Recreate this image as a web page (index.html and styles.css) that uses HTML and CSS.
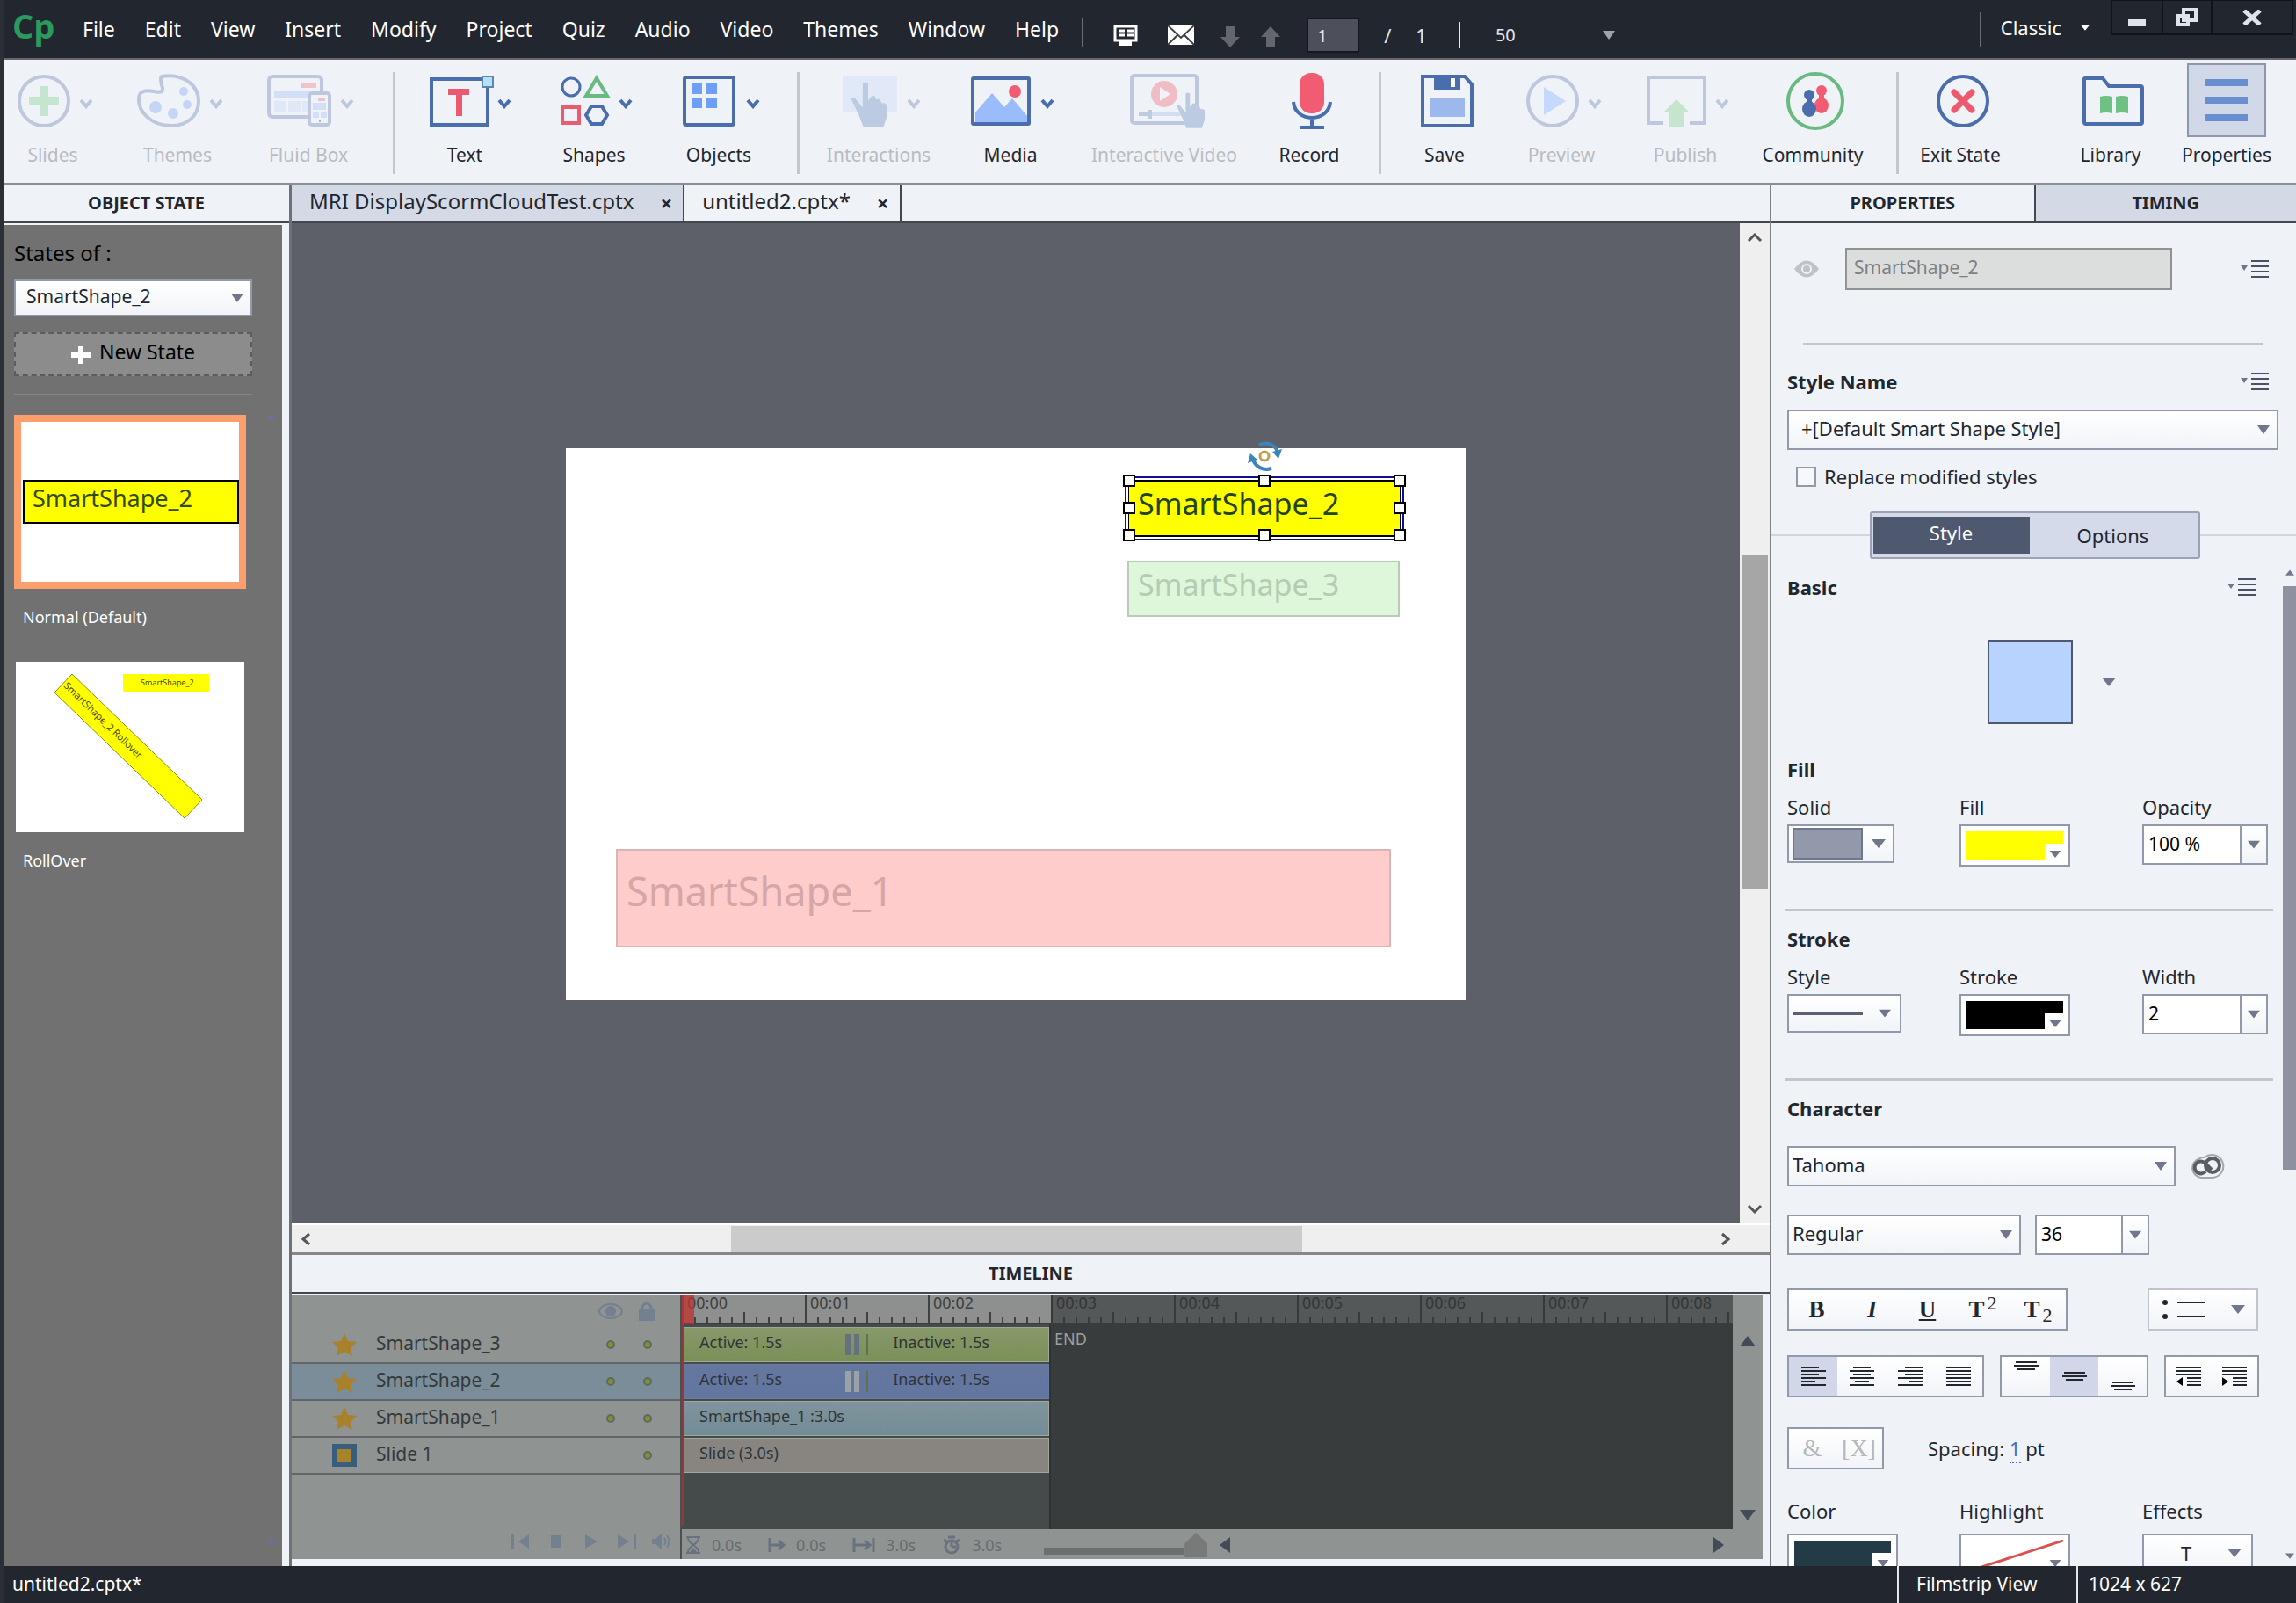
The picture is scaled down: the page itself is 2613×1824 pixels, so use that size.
FILE: index.html
```
<!DOCTYPE html>
<html lang="en">
<head>
  <meta charset="UTF-8">
  <meta name="viewport" content="width=device-width, initial-scale=1.0">
  <title>untitled2.cptx*</title>
  <link rel="stylesheet" href="styles.css">
</head>
<body>
  <!-- Shared symbols -->
  <svg class="symbols" aria-hidden="true">
    <symbol id="caret" viewBox="0 0 18 12"><path d="M3 2l6 7 6-7" fill="none" stroke="currentColor" stroke-width="4"/></symbol>
    <symbol id="down" viewBox="0 0 16 10"><path d="M0 0h16l-8 10z" fill="currentColor"/></symbol>
    <symbol id="up" viewBox="0 0 16 10"><path d="M0 10h16l-8-10z" fill="currentColor"/></symbol>
    <symbol id="hand" viewBox="0 0 40 52"><path d="M13 3q3-3 6 0v19l4-5q3-1 4 1l1 3q3-2 5 1l1 3q4-1 6 2v13l-4 12H14L9 39 0 20q2-3 5 0l8 10z" fill="currentColor"/></symbol>
    <symbol id="star" viewBox="0 0 28 26"><path d="M14 0l4 9 10 1-7 7 2 9-9-5-9 5 2-9-7-7 10-1z" fill="#a8812b"/></symbol>
    <symbol id="menu" viewBox="0 0 32 22"><path d="M0 7h8l-4 6z" fill="#70768c"/><path d="M12 2h20M12 8h20M12 14h20M12 20h20" stroke="#4a5068" stroke-width="2"/></symbol>
  </svg>

  <!-- Title bar -->
  <header class="titlebar">
    <span class="logo">Cp</span>
    <nav class="menu">
      <a href="#">File</a><a href="#">Edit</a><a href="#">View</a><a href="#">Insert</a><a href="#">Modify</a><a href="#">Project</a><a href="#">Quiz</a><a href="#">Audio</a><a href="#">Video</a><a href="#">Themes</a><a href="#">Window</a><a href="#">Help</a>
    </nav>
    <div class="title-tools">
      <button aria-label="Live preview"><svg width="28" height="24"><path d="M2 2h24v16H2z" fill="none" stroke="#fff" stroke-width="3"/><path d="M6 7h7M6 12h7M16 7h7M16 12h7" stroke="#fff" stroke-width="3"/><path d="M7 19h14v5H7z" fill="#fff"/></svg></button>
      <button aria-label="Mail"><svg width="30" height="22"><path d="M0 0h30v22H0z" fill="#fff"/><path d="M0 0l15 14L30 0M0 22l11-11M30 22L19 11" fill="none" stroke="#3a3f48" stroke-width="2"/></svg></button>
      <button aria-label="Next slide"><svg width="22" height="24"><path d="M6 0h10v12h6L11 24 0 12h6z" fill="#63666c"/></svg></button>
      <button aria-label="Previous slide"><svg width="22" height="24"><path d="M6 24h10V12h6L11 0 0 12h6z" fill="#63666c"/></svg></button>
      <input class="page" type="text" value="1" aria-label="Slide number">
      <span>/</span><span>1</span><span class="bar"></span>
      <select class="zoom" aria-label="Zoom"><option>50</option></select>
    </div>
    <button class="workspace">Classic <svg width="10" height="7"><use href="#down"/></svg></button>
    <div class="window-buttons">
      <button aria-label="Minimize"><svg width="20" height="8"><path d="M0 0h20v8H0z" fill="#dfe3ea"/></svg></button>
      <button aria-label="Restore"><svg width="26" height="22"><path d="M9 2h14v12H9zM3 9h11v10H3z" fill="#22262e" stroke="#dfe3ea" stroke-width="4"/></svg></button>
      <button aria-label="Close"><svg width="22" height="18"><path d="M2 1l18 16M20 1L2 17" stroke="#dfe3ea" stroke-width="5"/></svg></button>
    </div>
  </header>

  <!-- Toolbar -->
  <div class="toolbar">
    <div class="group g1">
      <button class="tool" disabled><span class="icon"><svg width="62" height="62"><circle cx="31" cy="31" r="28" fill="none" stroke="#bdc8df" stroke-width="4"/><path d="M26 14h10v12h12v10H36v12H26V36H14V26h12z" fill="#c5e5cf"/></svg><svg class="caret"><use href="#caret"/></svg></span>Slides</button>
      <button class="tool" disabled><span class="icon"><svg width="74" height="62"><path d="M29 3c23-4 42 9 42 28 0 17-13 28-31 28C17 59 2 43 3 28c0-8 7-10 17-8 9 2 12 0 9-7-1-4-2-8 0-10z" fill="none" stroke="#bdc8df" stroke-width="4"/><g fill="#c4d6f6"><circle cx="54" cy="20" r="5"/><circle cx="58" cy="35" r="5"/><circle cx="42" cy="45" r="6"/><circle cx="22" cy="38" r="7"/></g></svg><svg class="caret"><use href="#caret"/></svg></span>Themes</button>
      <button class="tool" disabled><span class="icon"><svg width="74" height="60"><rect x="2" y="2" width="60" height="46" rx="4" fill="none" stroke="#bdc8df" stroke-width="4"/><path d="M38 9h18v6H38z" fill="#efc3ca"/><path d="M8 18h48v9H8z" fill="#d3dff6"/><path d="M8 30h14v12H8zM24 30h14v12H24zM40 30h14v12H40z" fill="#e0e7f6"/><rect x="48" y="21" width="23" height="36" rx="3" fill="#eff2f7" stroke="#bdc8df" stroke-width="4"/><path d="M58 26h8v4h-8z" fill="#efc3ca"/><path d="M52 32h15v8H52zM52 43h7v6h-7zM61 43h7v6h-7z" fill="#d3dff6"/><circle cx="60" cy="53" r="1" fill="#8fa0c4"/></svg><svg class="caret"><use href="#caret"/></svg></span>Fluid Box</button>
    </div>
    <div class="group g2">
      <button class="tool"><span class="icon near"><svg width="76" height="60"><rect x="2" y="5" width="64" height="52" fill="none" stroke="#4a6dae" stroke-width="4"/><rect x="60" y="2" width="12" height="12" fill="#b5e0f8" stroke="#5a87ad" stroke-width="2"/><path d="M21 16h24v7h-8v24h-7V23h-9z" fill="#ec5a70"/></svg><svg class="caret"><use href="#caret"/></svg></span>Text</button>
      <button class="tool"><span class="icon"><svg width="58" height="60"><circle cx="13" cy="14" r="10" fill="none" stroke="#4a6dae" stroke-width="3"/><path d="M42 4l12 20H30z" fill="none" stroke="#68ba80" stroke-width="4"/><path d="M3 37h19v18H3z" fill="none" stroke="#ec5a70" stroke-width="4"/><path d="M36 36h12l6 10-6 10H36l-6-10z" fill="none" stroke="#4a6dae" stroke-width="4"/></svg><svg class="caret"><use href="#caret"/></svg></span>Shapes</button>
      <button class="tool"><span class="icon"><svg width="64" height="60"><rect x="3" y="3" width="56" height="54" rx="2" fill="none" stroke="#4a6dae" stroke-width="4"/><path d="M11 10h12v12H11zM27 10h13v12H27zM11 26h12v12H11zM27 26h13v12H27z" fill="#6f9ff8"/></svg><svg class="caret"><use href="#caret"/></svg></span>Objects</button>
    </div>
    <div class="group g3">
      <button class="tool" disabled><span class="icon"><svg width="66" height="60" color="#bccae2"><path d="M2 1h62v41H2z" fill="#e1e9f9"/><use href="#hand" x="11" y="7" width="42" height="53"/></svg><svg class="caret"><use href="#caret"/></svg></span>Interactions</button>
      <button class="tool"><span class="icon"><svg width="70" height="58"><path d="M5 53V42l19-22 14 16 9-10 18 21v6z" fill="#9abcfb"/><circle cx="50" cy="18" r="7" fill="#f25c73"/><rect x="2" y="3" width="64" height="52" rx="1" fill="none" stroke="#4a6dae" stroke-width="4"/></svg><svg class="caret"><use href="#caret"/></svg></span>Media</button>
      <button class="tool" disabled><span class="icon"><svg width="86" height="64" color="#bccae2"><rect x="3" y="3" width="74" height="54" rx="3" fill="none" stroke="#bdc8df" stroke-width="4"/><circle cx="40" cy="24" r="15" fill="#f0bdc7"/><path d="M35 16l12 8-12 8z" fill="#eff2f7"/><path d="M11 47h50" stroke="#d3dff0" stroke-width="4"/><path d="M11 47h12M24 42v10" stroke="#bccae2" stroke-width="4"/><use href="#hand" x="54" y="21" width="32" height="42"/></svg></span>Interactive Video</button>
      <button class="tool"><span class="icon"><svg width="46" height="66"><rect x="9" y="1" width="28" height="46" rx="13" fill="#f25c73"/><path d="M2 34c2 24 40 24 42 0M23 52v11M9 63h28" fill="none" stroke="#4a6dae" stroke-width="4"/></svg></span>Record</button>
    </div>
    <div class="group g4">
      <button class="tool"><span class="icon"><svg width="62" height="62"><path d="M3 3h48l8 9v47H3z" fill="none" stroke="#4a6dae" stroke-width="4"/><path d="M16 2h30v16H16z" fill="#4a6dae"/><path d="M35 5h5v10h-5z" fill="#fff"/><path d="M12 27h39v22H12z" fill="#9cb8ec"/></svg></span>Save</button>
      <button class="tool" disabled><span class="icon"><svg width="62" height="62"><circle cx="31" cy="31" r="28" fill="none" stroke="#bdc8df" stroke-width="4"/><path d="M21 15l25 16-25 16z" fill="#c4d9fb"/></svg><svg class="caret"><use href="#caret"/></svg></span>Preview</button>
      <button class="tool" disabled><span class="icon"><svg width="70" height="60"><path d="M20 55H3V3h64v52H50" fill="none" stroke="#bdc8df" stroke-width="4"/><path d="M35 28l14 14h-6v17H27V42h-6z" fill="#c5e5cf"/></svg><svg class="caret"><use href="#caret"/></svg></span>Publish</button>
      <button class="tool"><span class="icon"><svg width="68" height="68"><circle cx="34" cy="34" r="31" fill="none" stroke="#68ba80" stroke-width="4"/><g fill="#f25c73"><circle cx="41" cy="22" r="6"/><ellipse cx="41" cy="39" rx="8" ry="9"/><path d="M38 26h6v8h-6z"/></g><g fill="#4a6dae"><circle cx="27" cy="27" r="6"/><ellipse cx="27" cy="43" rx="8" ry="9"/><path d="M24 30h6v8h-6z"/></g></svg></span>Community</button>
    </div>
    <div class="group g5">
      <button class="tool"><span class="icon"><svg width="62" height="62"><circle cx="31" cy="31" r="28" fill="none" stroke="#4a6dae" stroke-width="4"/><path d="M21 21l20 20M41 21L21 41" stroke="#ec5a70" stroke-width="7" stroke-linecap="round"/></svg></span>Exit State</button>
      <button class="tool"><span class="icon"><svg width="72" height="58"><path d="M3 4q0-1 1-1h20l7 9h36q2 0 2 2v39q0 2-2 2H5q-2 0-2-2z" fill="none" stroke="#4a6dae" stroke-width="4"/><path d="M21 24q7-2 14 0v19q-7-2-14 0zM39 24q7-2 14 0v19q-7-2-14 0z" fill="#6dc184"/></svg></span>Library</button>
      <button class="tool active"><span class="icon"><svg width="48" height="48"><path d="M0 4h48M0 24h48M0 44h48" stroke="#6a8fd0" stroke-width="8"/></svg></span>Properties</button>
    </div>
  </div>

  <main class="workspace-area">
    <!-- Object states -->
    <aside class="states">
      <h2 class="panel-title">OBJECT STATE</h2>
      <div class="states-body">
        <div class="state-list">
          <label for="stateOf">States of :</label>
          <select id="stateOf" class="field"><option>SmartShape_2</option></select>
          <button class="new-state"><svg width="22" height="20"><path d="M8 0h6v7h8v6h-8v7H8v-7H0V7h8z" fill="#fff"/></svg>New State</button>
          <hr>
          <figure>
            <div class="thumb selected"><div class="thumb-shape">SmartShape_2</div></div>
            <figcaption>Normal (Default)</figcaption>
          </figure>
          <figure>
            <svg class="thumb rollover" viewBox="0 0 260 194">
              <path d="M122 14h98v20h-98z" fill="#ff0"/>
              <text x="142" y="27" font-size="9">SmartShape_2</text>
              <path d="M44 35l20-21 148 143-20 21z" fill="#ff0" stroke="#8a8a20" stroke-width="1"/>
              <text transform="translate(54 28) rotate(44)" font-size="11">SmartShape_2 Rollover</text>
            </svg>
            <figcaption>RollOver</figcaption>
          </figure>
        </div>
        <div class="state-scroll">
          <svg width="16" height="8"><use href="#up"/></svg>
          <svg width="16" height="8"><use href="#down"/></svg>
        </div>
      </div>
    </aside>

    <!-- Stage and timeline -->
    <section class="center">
      <div class="tabs">
        <div class="tab">MRI DisplayScormCloudTest.cptx<button aria-label="Close tab">×</button></div>
        <div class="tab current">untitled2.cptx*<button aria-label="Close tab">×</button></div>
      </div>
      <div class="stage-row">
        <div class="stage">
          <div class="slide">
            <div class="shape shape-2">SmartShape_2</div>
            <svg class="selection" width="324" height="116">
              <rect x="4" y="41" width="316" height="71" fill="none" stroke="#10108a" stroke-width="2"/>
              <rect x="6" y="43" width="312" height="67" fill="none" stroke="#fff" stroke-width="2"/>
              <g fill="#fff" stroke="#000" stroke-width="2">
                <rect x="2" y="39" width="12" height="12"/><rect x="156" y="39" width="12" height="12"/><rect x="310" y="39" width="12" height="12"/>
                <rect x="2" y="70" width="12" height="12"/><rect x="310" y="70" width="12" height="12"/>
                <rect x="2" y="101" width="12" height="12"/><rect x="156" y="101" width="12" height="12"/><rect x="310" y="101" width="12" height="12"/>
              </g>
              <circle cx="162" cy="17" r="5" fill="#fff" stroke="#c0a050" stroke-width="3"/>
              <path d="M156 4c10-4 18 0 21 8M170 31c-10 3-18-2-21-10" fill="none" stroke="#3d84b8" stroke-width="4"/>
              <path d="M171 12l11-3-4 11zM154 21l-11 4 3-11z" fill="#3d84b8"/>
            </svg>
            <div class="shape shape-3">SmartShape_3</div>
            <div class="shape shape-1">SmartShape_1</div>
          </div>
        </div>
        <div class="vscroll">
          <svg width="18" height="12"><path d="M2 10l7-7 7 7" fill="none" stroke="#555" stroke-width="3"/></svg>
          <div class="vtrack"><span></span></div>
          <svg width="18" height="12"><path d="M2 2l7 7 7-7" fill="none" stroke="#555" stroke-width="3"/></svg>
        </div>
      </div>
      <div class="hscroll">
        <svg width="12" height="16"><path d="M10 2L3 8l7 6" fill="none" stroke="#555" stroke-width="3"/></svg>
        <div class="htrack"><span></span></div>
        <svg width="12" height="16"><path d="M2 2l7 6-7 6" fill="none" stroke="#555" stroke-width="3"/></svg>
      </div>

      <h2 class="panel-title timeline-title">TIMELINE</h2>
      <div class="timeline">
        <div class="layers">
          <div class="layers-head">
            <svg width="30" height="20"><ellipse cx="15" cy="10" rx="13" ry="8" fill="none" stroke="#72808f" stroke-width="2"/><circle cx="15" cy="10" r="6" fill="#72808f"/></svg>
            <svg width="20" height="22"><path d="M5 9V6q5-8 10 0v3" fill="none" stroke="#72808f" stroke-width="3"/><path d="M1 9h18v13H1z" fill="#72808f"/></svg>
          </div>
          <div class="layer"><svg width="28" height="26"><use href="#star"/></svg><span>SmartShape_3</span><i></i><i></i></div>
          <div class="layer picked"><svg width="28" height="26"><use href="#star"/></svg><span>SmartShape_2</span><i></i><i></i></div>
          <div class="layer"><svg width="28" height="26"><use href="#star"/></svg><span>SmartShape_1</span><i></i><i></i></div>
          <div class="layer"><svg width="28" height="26"><path d="M3 3h22v20H3z" fill="#a8812b" stroke="#355f7d" stroke-width="6"/></svg><span>Slide 1</span><i></i></div>
          <div class="player">
            <button aria-label="Rewind"><svg width="22" height="16"><path d="M0 0h3v16H0zM20 0v16L8 8z" fill="#72808f"/></svg></button>
            <button aria-label="Stop"><svg width="22" height="16"><path d="M5 1h12v14H5z" fill="#72808f"/></svg></button>
            <button aria-label="Play"><svg width="22" height="16"><path d="M4 0v16l14-8z" fill="#72808f"/></svg></button>
            <button aria-label="Forward"><svg width="22" height="16"><path d="M19 0h3v16h-3zM1 0v16l13-8z" fill="#72808f"/></svg></button>
            <button aria-label="Sound"><svg width="22" height="18"><path d="M0 6h4l7-6v18l-7-6H0z" fill="#72808f"/><path d="M14 5q3 4 0 8M17 2q5 7 0 14" fill="none" stroke="#72808f" stroke-width="2"/></svg></button>
          </div>
        </div>
        <div class="tracks">
          <div class="ruler"><span>00:00</span><span>00:01</span><span>00:02</span><span class="off">00:03</span><span class="off">00:04</span><span class="off">00:05</span><span class="off">00:06</span><span class="off">00:07</span><span class="off last">00:08</span></div>
          <div class="track-area">
            <div class="clips">
              <div class="clip green"><span>Active: 1.5s</span><b></b><span>Inactive: 1.5s</span></div>
              <div class="clip blue"><span>Active: 1.5s</span><b></b><span>Inactive: 1.5s</span></div>
              <div class="clip teal"><span>SmartShape_1 :3.0s</span></div>
              <div class="clip sand"><span>Slide (3.0s)</span></div>
            </div>
            <div class="end">END</div>
          </div>
          <div class="playhead"></div>
          <div class="track-foot">
            <span><svg width="18" height="20"><path d="M1 1h16M1 19h16M3 2c0 8 12 8 12 16M15 2c0 8-12 8-12 16" fill="none" stroke="#68727e" stroke-width="2"/><path d="M5 18l4-5 4 5z" fill="#68727e"/></svg>0.0s</span>
            <span><svg width="20" height="18"><path d="M2 1v16M2 9h16M12 4l6 5-6 5" fill="none" stroke="#68727e" stroke-width="3"/></svg>0.0s</span>
            <span><svg width="26" height="18"><path d="M2 1v16M2 9h18M14 4l6 5-6 5M24 1v16" fill="none" stroke="#68727e" stroke-width="3"/></svg>3.0s</span>
            <span><svg width="22" height="22"><circle cx="11" cy="13" r="7" fill="none" stroke="#68727e" stroke-width="3"/><path d="M11 13V8M7 2h8M2 5l5 3M20 5l-5 3M11 13h5" stroke="#68727e" stroke-width="3"/></svg>3.0s</span>
            <input type="range" min="0" max="100" value="100" aria-label="Timeline zoom">
            <div class="foot-scroll">
              <svg width="12" height="18"><path d="M12 0v18L0 9z" fill="#434a58"/></svg>
              <svg width="12" height="18"><path d="M0 0v18l12-9z" fill="#434a58"/></svg>
            </div>
          </div>
        </div>
        <div class="track-scroll">
          <svg width="18" height="12"><path d="M0 12h18L9 0z" fill="#434a58"/></svg>
          <svg width="18" height="12"><path d="M0 0h18L9 12z" fill="#434a58"/></svg>
        </div>
      </div>
    </section>

    <!-- Properties -->
    <aside class="properties">
      <div class="panel-tabs">
        <button class="panel-title on">PROPERTIES</button>
        <button class="panel-title">TIMING</button>
      </div>
      <div class="object-row">
        <svg width="28" height="20"><path d="M0 10Q14-9 28 10 14 29 0 10z" fill="#bfc2c9"/><circle cx="14" cy="10" r="5" fill="none" stroke="#eff2f7" stroke-width="2"/></svg>
        <input type="text" value="SmartShape_2" aria-label="Object name" disabled>
        <button aria-label="Object options"><svg width="32" height="22"><use href="#menu"/></svg></button>
      </div>
      <hr class="top-rule">
      <div class="style-block">
        <div class="heading"><label for="styleName">Style Name</label><button aria-label="Style options"><svg width="32" height="22"><use href="#menu"/></svg></button></div>
        <select id="styleName" class="field"><option>+[Default Smart Shape Style]</option></select>
        <label class="check"><input type="checkbox">Replace modified styles</label>
      </div>
      <div class="switch">
        <div><button class="on">Style</button><button>Options</button></div>
      </div>

      <div class="scroller">
        <div class="props">
          <div class="heading basic">Basic<button aria-label="Basic options"><svg width="32" height="22"><use href="#menu"/></svg></button></div>
          <div class="swatch-row"><button class="swatch" aria-label="Shape colour"></button><svg width="18" height="10"><use href="#down"/></svg></div>

          <h3>Fill</h3>
          <div class="trio">
            <div><label for="solid">Solid</label><button id="solid" class="pick solid"><span></span><svg width="18" height="10"><use href="#down"/></svg></button></div>
            <div><label for="fill">Fill</label><button id="fill" class="color yellow"><span></span><em><svg width="14" height="8"><use href="#down"/></svg></em></button></div>
            <div><label for="opacity">Opacity</label><span class="combo"><input id="opacity" type="text" value="100 %"><button aria-label="Opacity values"><svg width="14" height="10"><use href="#down"/></svg></button></span></div>
          </div>
          <hr>
          <h3>Stroke</h3>
          <div class="trio">
            <div><label for="dash">Style</label><button id="dash" class="pick dash"><span></span><svg width="14" height="10"><use href="#down"/></svg></button></div>
            <div><label for="stroke">Stroke</label><button id="stroke" class="color black"><span></span><em><svg width="14" height="8"><use href="#down"/></svg></em></button></div>
            <div><label for="width">Width</label><span class="combo"><input id="width" type="text" value="2"><button aria-label="Width values"><svg width="14" height="10"><use href="#down"/></svg></button></span></div>
          </div>
          <hr>
          <h3>Character</h3>
          <div class="font-row">
            <select class="field family" aria-label="Font family"><option>Tahoma</option></select>
            <svg width="38" height="30" fill="none"><path d="M11 28a11 11 0 0 1-2-21.500q2-2 6-1.500a13 13 0 1 1 9 23z" stroke="#a3a6ab" stroke-width="2"/><circle cx="24" cy="14" r="8" stroke="#5a5d61" stroke-width="4"/><path d="M16 21a7 7 0 1 1-1-10l8 8" stroke="#5a5d61" stroke-width="4"/></svg>
          </div>
          <div class="size-row">
            <select class="field weight" aria-label="Font style"><option>Regular</option></select>
            <span class="combo"><input type="text" value="36" aria-label="Font size"><button aria-label="Size values"><svg width="14" height="10"><use href="#down"/></svg></button></span>
          </div>
          <div class="format-row">
            <div class="btns letters"><button><strong>B</strong></button><button><strong class="it">I</strong></button><button><u>U</u></button><button>T<sup>2</sup></button><button>T<sub>2</sub></button></div>
            <button class="bullets" aria-label="Bullets"><svg width="50" height="24"><circle cx="4" cy="4" r="3" fill="#22262e"/><circle cx="4" cy="20" r="3" fill="#22262e"/><path d="M18 4h32M18 20h32" stroke="#22262e" stroke-width="2"/></svg><svg width="18" height="10"><use href="#down"/></svg></button>
          </div>
          <div class="align-row">
            <div class="btns">
              <button class="on" aria-label="Align left"><svg width="28" height="24"><path d="M0 2h20M0 6h28M0 10h20M0 14h28M0 18h16M0 22h28"/></svg></button>
              <button aria-label="Align center"><svg width="28" height="24"><path d="M4 2h20M0 6h28M4 10h20M0 14h28M6 18h16M0 22h28"/></svg></button>
              <button aria-label="Align right"><svg width="28" height="24"><path d="M8 2h20M0 6h28M8 10h20M0 14h28M12 18h16M0 22h28"/></svg></button>
              <button aria-label="Justify"><svg width="28" height="24"><path d="M0 2h28M0 6h28M0 10h28M0 14h28M0 18h28M0 22h28"/></svg></button>
            </div>
            <div class="btns">
              <button aria-label="Align top"><svg width="28" height="36"><path d="M2 2h24M0 6h28M4 10h20"/></svg></button>
              <button class="on" aria-label="Align middle"><svg width="28" height="36"><path d="M2 14h24M0 18h28M4 22h20"/></svg></button>
              <button aria-label="Align bottom"><svg width="28" height="36"><path d="M2 25h24M0 29h28M4 33h20"/></svg></button>
            </div>
            <div class="btns indent">
              <button aria-label="Decrease indent"><svg width="28" height="24"><path d="M0 2h28M0 6h28M0 10h28M12 14h16M12 18h16M12 22h16"/><path class="dot" d="M7 13v10l-7-5z"/></svg></button>
              <button aria-label="Increase indent"><svg width="28" height="24"><path d="M0 2h28M0 6h28M0 10h28M12 14h16M12 18h16M12 22h16"/><path class="dot" d="M0 13v10l7-5z"/></svg></button>
            </div>
          </div>
          <div class="spacing-row">
            <div class="btns symbols-btns"><button disabled>&amp;</button><button disabled>[X]</button></div>
            <span>Spacing: <a href="#">1</a> pt</span>
          </div>
          <div class="trio last">
            <div><label for="color">Color</label><button id="color" class="color ink"><span></span><em><svg width="14" height="8"><use href="#down"/></svg></em></button></div>
            <div><label for="highlight">Highlight</label><button id="highlight" class="color none"><svg width="110" height="34"><path d="M14 32L110 1" stroke="#d9534f" stroke-width="3"/></svg><em><svg width="14" height="8"><use href="#down"/></svg></em></button></div>
            <div><label for="effects">Effects</label><button id="effects" class="pick effects">T<svg width="18" height="10"><use href="#down"/></svg></button></div>
          </div>
        </div>
        <div class="side-scroll">
          <svg width="10" height="7"><use href="#up"/></svg>
          <span></span>
          <svg width="10" height="7"><use href="#down"/></svg>
        </div>
      </div>
    </aside>
  </main>

  <!-- Status bar -->
  <footer class="status">
    <span class="file">untitled2.cptx*</span>
    <span class="view">Filmstrip View</span>
    <span class="dims">1024 x 627</span>
  </footer>
</body>
</html>
```
FILE: styles.css
```
* {
  box-sizing: border-box;
}
body {
  margin: 0;
  height: 100vh;
  display: flex;
  flex-direction: column;
  overflow: hidden;
  border-left: 4px solid #2c2f35;
  background: #eff2f7;
  color: #22262e;
  font-family: "Noto Sans", Tahoma, sans-serif;
  font-size: 22px;
  line-height: 30px;
}
button, input, select {
  font: inherit;
  color: inherit;
  margin: 0;
  padding: 0;
}
button {
  border: none;
  background: none;
}
svg {
  display: block;
  flex: none;
}
hr {
  border: none;
  margin: 0;
}
.symbols {
  display: none;
}

/* Title bar */
.titlebar {
  display: flex;
  align-items: flex-start;
  height: 68px;
  flex: none;
  background: #22262e;
  border-bottom: 2px solid #66686c;
  color: #fff;
}
.logo {
  width: 90px;
  padding-left: 10px;
  font: bold 38px/58px "Open Sans", sans-serif;
  color: #2b9a5e;
}
.menu {
  display: flex;
  gap: 34px;
  font-size: 23px;
  line-height: 66px;
}
.menu a {
  color: #fff;
  text-decoration: none;
}
.title-tools {
  display: flex;
  align-items: center;
  flex: 1;
  height: 40px;
  margin: 20px 0 0 26px;
  padding-left: 36px;
  background: linear-gradient(#6a6d73, #6a6d73) no-repeat 0 0 / 2px 34px;
  color: #e4e6ea;
}
.title-tools button {
  margin-right: 34px;
}
.title-tools button:nth-child(2), .title-tools button:nth-child(4) {
  margin-right: 30px;
}
.title-tools button:nth-child(3) {
  margin-right: 24px;
}
.title-tools button:nth-child(3), .title-tools button:nth-child(4) {
  padding-top: 4px;
}
.title-tools span {
  margin-left: 28px;
}
.title-tools .bar {
  width: 2px;
  height: 30px;
  margin-left: 36px;
  background: #e4e6ea;
}
.page {
  width: 60px;
  height: 40px;
  padding-left: 10px;
  background: #4d505b;
  border: 2px solid #15181e;
  font-size: 20px;
}
.zoom {
  appearance: none;
  width: 136px;
  margin-left: 40px;
  border: none;
  font-size: 20px;
  background: url("data:image/svg+xml,%3Csvg xmlns='http://www.w3.org/2000/svg' width='14' height='10'%3E%3Cpath d='M0 0h14l-7 10z' fill='%23a0a3a9'/%3E%3C/svg%3E") no-repeat right center;
}
.workspace {
  display: flex;
  align-items: center;
  gap: 22px;
  height: 40px;
  margin-top: 14px;
  padding: 0 24px 6px 22px;
  border-left: 2px solid #6a6d73;
}
.window-buttons {
  display: flex;
  height: 40px;
  margin-right: 3px;
  border: 2px solid #101318;
  border-top-width: 1px;
}
.window-buttons button {
  width: 56px;
  display: flex;
  justify-content: center;
  align-items: center;
}
.window-buttons button + button {
  border-left: 2px solid #101318;
}
.window-buttons button:first-child {
  padding-top: 12px;
}
.window-buttons button:last-child {
  width: 92px;
}

/* Toolbar */
.toolbar {
  display: flex;
  height: 142px;
  flex: none;
  border-bottom: 2px solid #8b8e93;
  font-size: 21px;
}
.group {
  display: grid;
  background: linear-gradient(#c3c7ce, #c3c7ce) no-repeat 0 14px / 3px 116px;
}
.g1 { flex: 443 1 0; background: none; grid-template-columns: 112fr 172fr 126fr 33fr; }
.g2 { flex: 460 1 0; grid-template-columns: 164fr 130fr 154fr 12fr; }
.g3 { flex: 662 1 0; grid-template-columns: 186fr 114fr 236fr 94fr 32fr; }
.g4 { flex: 589 1 0; grid-template-columns: 150fr 116fr 166fr 124fr 33fr; }
.g5 { flex: 455 1 0; grid-template-columns: 146fr 196fr 68fr 45fr; }
.tool {
  display: flex;
  flex-direction: column;
  align-items: center;
  min-width: 0;
  padding-top: 4px;
  white-space: nowrap;
}
.tool:disabled {
  color: #b9bcc2;
}
.icon {
  display: flex;
  align-items: center;
  justify-content: center;
  gap: 8px;
  height: 84px;
  margin-bottom: 5px;
  padding: 2px 0 0 5px;
}
.near {
  gap: 0;
  padding-left: 14px;
}
.caret {
  width: 18px;
  height: 12px;
  margin-top: 6px;
  color: #4a6dae;
}
.tool:disabled .caret {
  color: #bdc8df;
}
.active .icon {
  width: 90px;
  padding: 0;
  background: #d1d8e8;
  border: 2px solid #8d96ab;
}

/* Panels */
.workspace-area {
  flex: 1;
  min-height: 0;
  display: grid;
  grid-template-columns: 328px minmax(0, 1fr) 599px;
}
.panel-title {
  height: 44px;
  margin: 0;
  border-bottom: 2px solid #43474f;
  font-size: 20px;
  font-weight: bold;
  line-height: 42px;
  text-align: center;
}

/* Object states */
.states {
  display: flex;
  flex-direction: column;
  border-right: 3px solid #6d7178;
}
.states-body {
  flex: 1;
  display: flex;
  margin: 2px 8px 0 0;
  padding: 17px 4px 0 12px;
  background: #717171;
}
.state-list {
  flex: 1;
}
.state-list label {
  display: block;
  font-size: 24px;
  line-height: 30px;
  color: #000;
}
.field {
  appearance: none;
  display: block;
  width: 100%;
  height: 46px;
  padding: 0 12px 4px;
  border: 2px solid #9299ab;
  border-radius: 0;
  background: url("data:image/svg+xml,%3Csvg xmlns='http://www.w3.org/2000/svg' width='14' height='10'%3E%3Cpath d='M0 0h14l-7 10z' fill='%2370768c'/%3E%3C/svg%3E") no-repeat right 8px center, linear-gradient(#fff, #f1f4f8);
}
.state-list .field {
  height: 42px;
  margin-top: 15px;
  font-size: 21px;
}
.new-state {
  display: flex;
  align-items: center;
  justify-content: center;
  gap: 10px;
  width: 100%;
  height: 50px;
  margin-top: 18px;
  padding-bottom: 6px;
  background: #8c8c8c;
  border: 2px dashed #5c5c5c;
  color: #000;
  font-size: 23px;
}
.new-state svg {
  margin-top: 8px;
}
.state-list hr {
  height: 2px;
  margin: 20px 0 22px;
  background: #83868e;
}
.state-scroll {
  display: flex;
  flex-direction: column;
  justify-content: space-between;
  margin-left: 14px;
  padding: 197px 0 22px;
  color: #6b7194;
}
figure {
  margin: 0 0 36px;
}
figcaption {
  padding: 17px 10px 0;
  color: #fff;
  font-size: 18px;
}
.thumb {
  width: 264px;
  background: #fff;
}
.thumb.selected {
  height: 198px;
  padding: 66px 0 0 2px;
  border: 8px solid #fc9f6c;
}
.thumb-shape {
  height: 50px;
  padding-left: 9px;
  background: #ff0;
  border: 2px solid #000;
  color: #344a10;
  font-size: 27px;
  line-height: 38px;
}
.rollover {
  width: 260px;
  height: 194px;
  margin-left: 2px;
  fill: #4c4c10;
}

/* Document tabs */
.center {
  display: flex;
  flex-direction: column;
  min-height: 0;
}
.tabs {
  display: flex;
  height: 44px;
  flex: none;
  border-bottom: 2px solid #43474f;
  font-size: 24px;
  line-height: 38px;
}
.tab {
  display: flex;
  padding: 0 12px 0 20px;
  background: #d3dae6;
  border-right: 2px solid #43474f;
}
.tab button {
  margin-left: 30px;
  font-size: 24px;
  font-weight: bold;
}
.tab.current {
  background: #eff2f7;
}

/* Stage */
.stage-row {
  flex: 1;
  min-height: 0;
  display: flex;
}
.stage {
  flex: 1;
  display: flex;
  align-items: center;
  justify-content: center;
  padding-top: 2px;
  background: #5d6068;
}
.slide {
  position: relative;
  width: 1024px;
  height: 628px;
  background: #fff;
}
.shape {
  position: absolute;
  padding-left: 10px;
  border: 2px solid;
  font-size: 34px;
}
.shape-2 {
  left: 639px;
  top: 36px;
  width: 312px;
  height: 65px;
  background: #ff0;
  border-color: #000;
  color: #24431f;
  line-height: 50px;
}
.shape-3 {
  left: 639px;
  top: 128px;
  width: 310px;
  height: 64px;
  background: #def6d9;
  border-color: #bccbb9;
  color: #b5cbb3;
  line-height: 50px;
}
.shape-1 {
  left: 57px;
  top: 456px;
  width: 882px;
  height: 112px;
  background: #fecccb;
  border-color: #dcb4b6;
  color: #d4a6a8;
  font-size: 45px;
  line-height: 92px;
}
.selection {
  position: absolute;
  left: 633px;
  top: -8px;
}
.vscroll {
  width: 34px;
  display: flex;
  flex-direction: column;
  align-items: center;
  padding: 10px 2px;
  background: #efefef;
}
.vtrack {
  flex: 1;
  align-self: stretch;
  display: grid;
  grid-template-rows: 356fr 380fr 358fr;
}
.vtrack span {
  grid-row: 2;
  background: #a6a6a6;
}
.hscroll {
  display: flex;
  align-items: center;
  height: 36px;
  flex: none;
  padding: 0 44px 0 10px;
  background: #efefef;
  border-top: 2px solid #fff;
  border-bottom: 3px solid #85878b;
}
.htrack {
  flex: 1;
  height: 30px;
  display: grid;
  grid-template-columns: 478fr 650fr 476fr;
}
.htrack span {
  grid-column: 2;
  background: #cbcbcb;
}

/* Timeline */
.timeline-title {
  flex: none;
}
.timeline {
  display: grid;
  grid-template-columns: 444px minmax(0, 1fr) 34px;
  height: 300px;
  flex: none;
  margin: 2px 8px 8px 0;
  background: #8f9392;
}
.layers {
  display: flex;
  flex-direction: column;
  border-right: 2px solid #4c5052;
  font-size: 21px;
}
.layers-head {
  display: flex;
  align-items: center;
  justify-content: flex-end;
  gap: 16px;
  height: 36px;
  padding: 0 28px 0 0;
}
.layer {
  display: flex;
  align-items: center;
  height: 42px;
  padding: 0 32px 0 46px;
  border-bottom: 2px solid #616567;
  color: #34393c;
}
.layer.picked {
  background: #7b8d98;
}
.layer span {
  flex: 1;
  padding: 0 0 4px 22px;
}
.layer i {
  width: 10px;
  height: 10px;
  margin-left: 32px;
  border: 2px solid #55705a;
  border-radius: 50%;
  background: #8d8838;
}
.player {
  display: flex;
  justify-content: flex-end;
  gap: 18px;
  margin-top: auto;
  padding: 0 10px 11px;
}
.tracks {
  position: relative;
  display: flex;
  flex-direction: column;
  min-width: 0;
  background: #383c3c;
}
.ruler {
  display: grid;
  grid-template-columns: repeat(8, 140fr) 76fr;
  height: 33px;
  border-bottom: 2px solid #3a3d3e;
  color: #3d3f40;
  font-size: 18px;
  line-height: 16px;
}
.ruler span {
  padding-left: 4px;
  border-left: 2px solid #3f4243;
  background:
    linear-gradient(#3f4243, #3f4243) no-repeat 50% 100% / 2px 12px,
    repeating-linear-gradient(90deg, transparent 0 12px, #3f4243 12px 14px) 0 100% / 100% 6px no-repeat,
    #8e8f8f;
}
.ruler .off {
  color: #333737;
  border-color: #363a3a;
  background:
    linear-gradient(#363a3a, #363a3a) no-repeat 50% 100% / 2px 12px,
    repeating-linear-gradient(90deg, transparent 0 12px, #363a3a 12px 14px) 0 100% / 100% 6px no-repeat,
    #545858;
}
.ruler .last {
  background-position: 68px 100%, 0 100%, 0 0;
}
.track-area {
  flex: 1;
  display: grid;
  grid-template-columns: 420fr 776fr;
}
.clips {
  padding-top: 3px;
  background: #454a4a;
  border-right: 2px solid #2f3333;
}
.clip {
  display: flex;
  height: 40px;
  margin: 0 0 2px 2px;
  border: 1px solid #a0a89c;
  color: #2f3438;
  font-size: 18px;
  line-height: 32px;
}
.clip span:first-child {
  padding-left: 17px;
}
.clip b {
  width: 26px;
  height: 24px;
  margin: 7px 28px 0 72px;
  border-right: 2px solid #5c7350;
  background: linear-gradient(90deg, #66717f 0 6px, transparent 6px 10px, #66717f 10px 16px, transparent 16px);
}
.green { background: linear-gradient(#88986a, #7a9058); }
.blue { background: linear-gradient(#65779f, #6276a0); border-color: #6a7ba4; }
.blue b { background: linear-gradient(90deg, #9aa2a8 0 6px, transparent 6px 10px, #9aa2a8 10px 16px, transparent 16px); }
.teal { background: linear-gradient(#80949c, #728c96); }
.sand { background: #888580; }
.end {
  padding: 6px 4px;
  color: #9b9fa0;
  font-size: 18px;
  line-height: 20px;
}
.playhead {
  position: absolute;
  left: 0;
  top: 0;
  width: 2px;
  height: 262px;
  background: #8c3a3a;
}
.playhead::before {
  content: "";
  display: block;
  width: 14px;
  height: 33px;
  background: rgba(190, 50, 50, .75);
}
.track-foot {
  display: flex;
  align-items: center;
  height: 34px;
  padding-top: 2px;
  background: #8f9392;
  color: #686c70;
  font-size: 18px;
}
.track-foot span {
  display: flex;
  align-items: center;
  gap: 12px;
  margin: 0 30px 0 4px;
}
.track-foot span + span {
  margin-left: 0;
}
.track-foot input {
  appearance: none;
  width: 186px;
  height: 30px;
  margin: 0 14px 0 18px;
  background: linear-gradient(#6c6f6e, #6c6f6e) no-repeat 0 18px / 160px 8px;
}
.track-foot input::-webkit-slider-thumb {
  appearance: none;
  width: 26px;
  height: 28px;
  background: #777a79;
  clip-path: polygon(50% 0, 100% 45%, 100% 100%, 0 100%, 0 45%);
}
.foot-scroll {
  flex: 1;
  display: flex;
  justify-content: space-between;
  padding-right: 10px;
}
.track-scroll {
  display: flex;
  flex-direction: column;
  justify-content: space-between;
  align-items: center;
  padding: 46px 0 44px;
}

/* Properties */
.properties {
  display: flex;
  flex-direction: column;
  min-height: 0;
  border-left: 2px solid #7e8187;
}
.panel-tabs {
  display: grid;
  grid-template-columns: 1fr 1fr;
}
.panel-tabs .panel-title {
  background: #d3dae6;
  border-left: 2px solid #43474f;
}
.panel-tabs .on {
  background: none;
  border-left: none;
}
.object-row {
  display: flex;
  align-items: center;
  height: 48px;
  margin-top: 28px;
  padding: 0 31px 0 26px;
}
.object-row input {
  width: 372px;
  height: 48px;
  margin: 0 auto 0 30px;
  padding: 0 8px 4px;
  border: 2px solid #909294;
  background: #dcdddd;
  color: #7d8084;
  font-size: 21px;
}
.top-rule {
  height: 3px;
  margin: 60px 37px 0 36px;
  background: #c3c6cd;
}
.heading {
  display: flex;
  justify-content: space-between;
  align-items: center;
  font-weight: bold;
}
.style-block {
  padding: 26px 20px 0 18px;
}
.style-block .heading {
  padding-right: 11px;
}
.style-block .field {
  margin-top: 17px;
  padding-left: 14px;
}
.check {
  display: flex;
  align-items: center;
  gap: 9px;
  margin: 15px 0 0 10px;
}
.check input {
  appearance: none;
  width: 23px;
  height: 23px;
  border: 2px solid #9299ab;
  background: #f6f8fb;
}
.switch {
  display: flex;
  justify-content: center;
  margin-top: 25px;
  padding-left: 2px;
  background: linear-gradient(#d2d5d9, #d2d5d9) no-repeat 0 50% / 100% 2px;
}
.switch div {
  display: grid;
  grid-template-columns: 178px 190px;
  height: 54px;
  padding: 4px 2px;
  background: #d4daea;
  border: 2px solid #9ba2b4;
  border-radius: 3px;
}
.switch .on {
  padding-bottom: 6px;
  background: #4e586e;
  color: #fff;
}
.scroller {
  flex: 1;
  min-height: 0;
  display: flex;
}
.props {
  flex: 1;
  padding: 17px 17px 0 18px;
  overflow: hidden;
}
.props .basic {
  padding-right: 14px;
}
.swatch-row {
  display: grid;
  grid-template-columns: 227fr 97px 32px 189fr;
  align-items: center;
  margin-top: 45px;
  color: #70768c;
}
.swatch {
  grid-column: 2;
  height: 96px;
  background: #b8d3fd;
  border: 2px solid #4e586e;
}
.swatch-row svg {
  grid-column: 4;
}
h3 {
  margin: 0;
  padding-top: 16px;
  font-size: 22px;
  line-height: 30px;
}
.swatch-row + h3 {
  padding-top: 36px;
}
.props hr {
  height: 3px;
  margin: 48px -6px 0 -2px;
  background: #c3c6cd;
}
.trio {
  display: grid;
  grid-template-columns: 196fr 208fr 143fr;
  height: 83px;
  margin-top: 13px;
}
.trio label {
  display: block;
  margin-bottom: 5px;
}
.pick, .color, .combo, .btns, .bullets {
  display: flex;
  align-items: center;
  border: 2px solid #9299ab;
  background: linear-gradient(#fff, #f1f4f8);
}
.pick, .combo button, .color em, .bullets {
  color: #70768c;
}
.pick {
  height: 44px;
  justify-content: space-between;
  padding: 0 7px 0 4px;
}
.solid {
  width: 122px;
}
.solid span {
  width: 80px;
  height: 36px;
  background: #9299ab;
  border: 2px solid #70768c;
}
.dash {
  width: 130px;
  padding-right: 10px;
}
.dash span {
  width: 80px;
  height: 4px;
  background: #5c6074;
}
.color {
  position: relative;
  width: 126px;
  height: 48px;
  padding: 6px;
  background: #fff;
}
.color span {
  flex: 1;
  align-self: stretch;
}
.color em {
  position: absolute;
  right: 4px;
  bottom: 4px;
  padding: 8px 4px 4px 5px;
  background: #fff;
}
.yellow span { background: #ff0; }
.black span { background: #000; }
.ink span { background: #233b45; }
.none em { background: none; }
.combo {
  height: 46px;
  width: 143px;
}
.combo input {
  flex: 1;
  min-width: 0;
  height: 42px;
  padding: 0 5px 2px;
  border: none;
  background: #fff;
  color: #000;
  font-size: 21px;
}
.combo button {
  width: 30px;
  height: 42px;
  padding-left: 7px;
  border-left: 2px solid #9299ab;
}
.font-row, .size-row, .format-row, .align-row, .spacing-row {
  display: flex;
  align-items: center;
}
.font-row {
  gap: 18px;
  margin-top: 28px;
}
.family {
  width: 442px;
  padding-left: 4px;
}
.size-row {
  gap: 16px;
  margin-top: 32px;
}
.weight {
  width: 266px;
  padding-left: 4px;
}
.size-row .combo {
  width: 130px;
}
.format-row {
  justify-content: space-between;
  margin-top: 38px;
  padding-right: 11px;
}
.btns {
  height: 48px;
}
.btns button {
  display: flex;
  align-items: center;
  justify-content: center;
  width: 55px;
  height: 44px;
}
.btns .on {
  background: #d1d7e8;
}
.btns path {
  stroke: #22262e;
  stroke-width: 2;
}
.btns .dot {
  stroke: none;
}
.btns.indent button {
  width: 52px;
}
.btns.letters button {
  width: 63px;
  font: bold 27px/30px "Liberation Serif", serif;
}
.letters .it {
  font-style: italic;
}
.letters sup, .letters sub {
  margin-left: 3px;
  font-size: 22px;
  font-weight: normal;
  line-height: 20px;
}
.letters sup {
  padding-bottom: 14px;
}
.letters sub {
  padding-top: 14px;
}
.bullets {
  width: 126px;
  height: 48px;
  justify-content: space-between;
  padding: 0 12px 0 14px;
  border-color: #c0c4cf;
}
.align-row {
  gap: 18px;
  margin-top: 28px;
}
.spacing-row {
  gap: 50px;
  margin-top: 34px;
}
.btns.symbols-btns button {
  width: 53px;
  color: #b4b7bc;
  font: 28px/30px "Liberation Serif", serif;
}
.spacing-row a {
  color: #3d6fc4;
  text-decoration: none;
  border-bottom: 2px dotted #3d6fc4;
}
.trio.last {
  height: 76px;
  margin-top: 32px;
}
.last label {
  margin-bottom: 11px;
}
.effects {
  width: 126px;
  height: 48px;
  padding: 0 10px 4px 42px;
  color: #22262e;
}
.effects svg {
  color: #70768c;
}
.side-scroll {
  width: 15px;
  display: flex;
  flex-direction: column;
  align-items: center;
  padding: 12px 0 8px;
  color: #70768c;
}
.side-scroll span {
  align-self: stretch;
  flex: 0 1 59%;
  margin: 12px 0 auto;
  background: #8e92a0;
}

/* Status bar */
.status {
  display: flex;
  height: 42px;
  flex: none;
  background: #22262e;
  color: #fff;
  font-size: 21px;
  line-height: 40px;
}
.file {
  flex: 1;
  padding-left: 10px;
}
.view {
  width: 204px;
  padding-left: 20px;
  border-left: 2px solid #e4e6ea;
}
.dims {
  width: 250px;
  padding-left: 12px;
  border-left: 2px solid #e4e6ea;
}
```
